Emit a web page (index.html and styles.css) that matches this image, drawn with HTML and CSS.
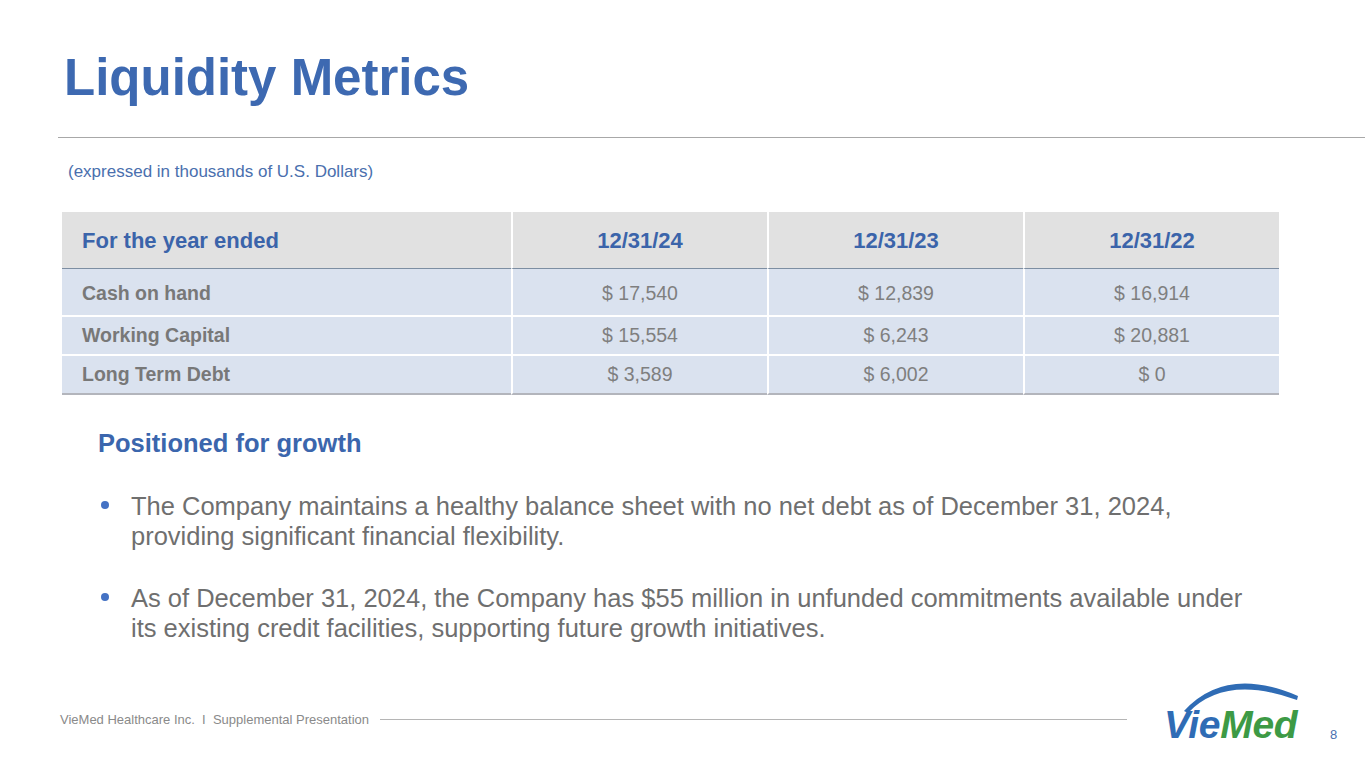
FILE: index.html
```html
<!DOCTYPE html>
<html lang="en">
<head>
<meta charset="utf-8">
<title>Liquidity Metrics</title>
<link rel="stylesheet" href="styles.css">
</head>
<body>
<div class="slide">
  <h1 class="title">Liquidity Metrics</h1>
  <div class="rule"></div>
  <p class="note">(expressed in thousands of U.S. Dollars)</p>

  <div class="tbl">
    <div class="cell head first">For the year ended</div>
    <div class="cell head">12/31/24</div>
    <div class="cell head">12/31/23</div>
    <div class="cell head">12/31/22</div>

    <div class="cell row r1 first label">Cash on hand</div>
    <div class="cell row r1">$ 17,540</div>
    <div class="cell row r1">$ 12,839</div>
    <div class="cell row r1">$ 16,914</div>

    <div class="cell row first label">Working Capital</div>
    <div class="cell row">$ 15,554</div>
    <div class="cell row">$ 6,243</div>
    <div class="cell row">$ 20,881</div>

    <div class="cell row last first label">Long Term Debt</div>
    <div class="cell row last">$ 3,589</div>
    <div class="cell row last">$ 6,002</div>
    <div class="cell row last">$ 0</div>
  </div>

  <h2 class="sub">Positioned for growth</h2>
  <div class="bullets">
    <div class="bullet"><span class="dot"></span><p>The Company maintains a healthy balance sheet with no net debt as of December 31, 2024,<br>providing significant financial flexibility.</p></div>
    <div class="bullet"><span class="dot"></span><p>As of December 31, 2024, the Company has $55 million in unfunded commitments available under<br>its existing credit facilities, supporting future growth initiatives.</p></div>
  </div>

  <footer class="footer">
    <span class="foot-text">VieMed Healthcare Inc.&nbsp; I &nbsp;Supplemental Presentation</span>
    <span class="foot-line"></span>
    <svg class="logo" width="150" height="72" viewBox="0 0 150 72" aria-label="VieMed">
      <path d="M24,31 Q66,-15 138,16 L137,20 Q65,-6 28,33 Z" fill="#2f6cb5"/>
      <text x="4" y="58" font-family="Liberation Sans, Arial, sans-serif" font-weight="700" font-style="italic" font-size="39" letter-spacing="-0.3"><tspan fill="#2f6cb5">Vie</tspan><tspan fill="#3d9a45">Med</tspan></text>
    </svg>
    <span class="page">8</span>
  </footer>
</div>
</body>
</html>
```

FILE: styles.css
```css
html, body {
  margin: 0;
  padding: 0;
  background: #ffffff;
}

.slide {
  width: 1365px;
  height: 768px;
  display: flex;
  flex-direction: column;
  font-family: "Liberation Sans", Arial, sans-serif;
  overflow: hidden;
}

.title {
  margin: 48px 0 0 64px;
  font-size: 51px;
  line-height: 60px;
  font-weight: 700;
  color: #3d69b1;
}

.rule {
  margin: 29px 0 0 58px;
  height: 1px;
  background: #a8a8a8;
}

.note {
  margin: 24px 0 0 68px;
  font-size: 17px;
  line-height: 20px;
  color: #4a6fae;
}

.tbl {
  margin: 30px 0 0 62px;
  display: grid;
  grid-template-columns: 449px 256px 256px 256px;
  width: 1217px;
}

.cell {
  display: flex;
  align-items: center;
  justify-content: center;
  box-sizing: border-box;
  border-left: 2px solid #ffffff;
}

.cell.first {
  border-left: none;
  justify-content: flex-start;
  padding-left: 20px;
}

.head {
  height: 57px;
  background: #e1e1e1;
  border-bottom: 1px solid #7d8ea2;
  font-size: 22px;
  font-weight: 700;
  color: #3b64aa;
  padding-top: 2px;
}

.row {
  height: 39px;
  background: #dae2ef;
  border-bottom: 2px solid #ffffff;
  font-size: 19.5px;
  color: #7f7f7f;
}

.row.r1 {
  height: 48px;
  padding-top: 3px;
}

.row.last {
  border-bottom: 2px solid #b3b5bc;
}

.label {
  font-weight: 700;
  font-size: 19.5px;
  color: #787878;
}

.sub {
  margin: 33px 0 0 98px;
  font-size: 25.5px;
  line-height: 30px;
  font-weight: 700;
  color: #3b66ad;
}

.bullets {
  margin: 33px 0 0 101px;
  display: flex;
  flex-direction: column;
  gap: 32px;
}

.bullet {
  display: flex;
  align-items: flex-start;
}

.dot {
  flex: none;
  width: 8px;
  height: 8px;
  border-radius: 50%;
  background: #4472c4;
  margin: 10px 22px 0 0;
}

.bullet p {
  margin: 0;
  font-size: 25.5px;
  line-height: 30px;
  color: #6f6f6f;
}

.footer {
  margin-top: auto;
  margin-bottom: 26px;
  height: 62px;
  display: flex;
  align-items: flex-start;
  padding-left: 60px;
}

.foot-text {
  margin-top: 32px;
  font-size: 13px;
  line-height: 16px;
  color: #8a8a8a;
  white-space: nowrap;
  width: 306px;
}

.foot-line {
  margin: 39px 0 0 14px;
  width: 747px;
  height: 1px;
  background: #b5b5b5;
}

.logo {
  display: block;
  margin-left: 33px;
  overflow: visible;
}

.page {
  margin: 47px 0 0 20px;
  font-size: 13px;
  line-height: 16px;
  color: #4a70b0;
}
```
